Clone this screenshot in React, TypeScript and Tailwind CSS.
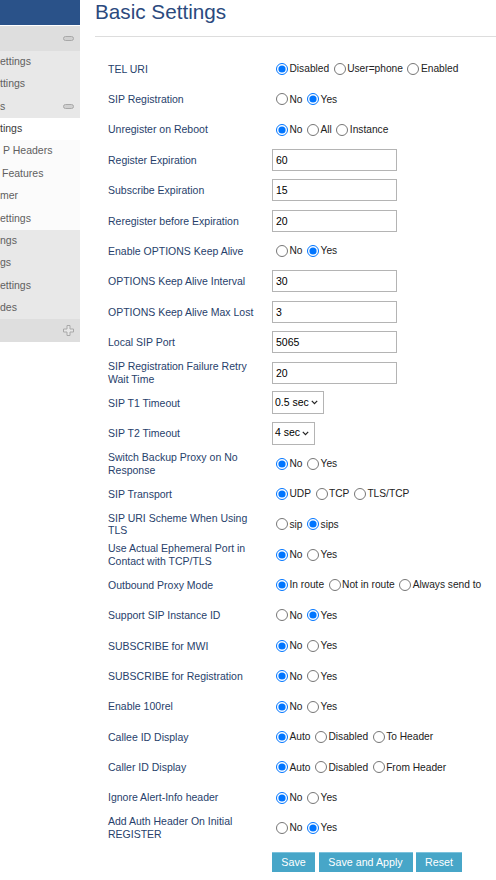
import React from "react";

type Row = {
  label: string;
  opts?: string[];
  sel?: number;
  input?: string;
  select?: string;
  selW?: number;
};

const rows: Row[] = [
  { label: "TEL URI", opts: ["Disabled", "User=phone", "Enabled"], sel: 0 },
  { label: "SIP Registration", opts: ["No", "Yes"], sel: 1 },
  { label: "Unregister on Reboot", opts: ["No", "All", "Instance"], sel: 0 },
  { label: "Register Expiration", input: "60" },
  { label: "Subscribe Expiration", input: "15" },
  { label: "Reregister before Expiration", input: "20" },
  { label: "Enable OPTIONS Keep Alive", opts: ["No", "Yes"], sel: 1 },
  { label: "OPTIONS Keep Alive Interval", input: "30" },
  { label: "OPTIONS Keep Alive Max Lost", input: "3" },
  { label: "Local SIP Port", input: "5065" },
  { label: "SIP Registration Failure Retry Wait Time", input: "20" },
  { label: "SIP T1 Timeout", select: "0.5 sec", selW: 52 },
  { label: "SIP T2 Timeout", select: "4 sec", selW: 43 },
  { label: "Switch Backup Proxy on No Response", opts: ["No", "Yes"], sel: 0 },
  { label: "SIP Transport", opts: ["UDP", "TCP", "TLS/TCP"], sel: 0 },
  { label: "SIP URI Scheme When Using TLS", opts: ["sip", "sips"], sel: 1 },
  { label: "Use Actual Ephemeral Port in Contact with TCP/TLS", opts: ["No", "Yes"], sel: 0 },
  { label: "Outbound Proxy Mode", opts: ["In route", "Not in route", "Always send to"], sel: 0 },
  { label: "Support SIP Instance ID", opts: ["No", "Yes"], sel: 1 },
  { label: "SUBSCRIBE for MWI", opts: ["No", "Yes"], sel: 0 },
  { label: "SUBSCRIBE for Registration", opts: ["No", "Yes"], sel: 0 },
  { label: "Enable 100rel", opts: ["No", "Yes"], sel: 0 },
  { label: "Callee ID Display", opts: ["Auto", "Disabled", "To Header"], sel: 0 },
  { label: "Caller ID Display", opts: ["Auto", "Disabled", "From Header"], sel: 0 },
  { label: "Ignore Alert-Info header", opts: ["No", "Yes"], sel: 0 },
  { label: "Add Auth Header On Initial REGISTER", opts: ["No", "Yes"], sel: 1 },
];

function MinusIcon() {
  return (
    <svg width="11" height="5" viewBox="0 0 11 5">
      <rect x="0.5" y="0.5" width="10" height="4" rx="2" fill="#d0d0d0" stroke="#a8a8a8" />
    </svg>
  );
}

function PlusIcon() {
  return (
    <svg width="11" height="11" viewBox="0 0 11 11">
      <path
        d="M4 0.5h3v3.5h3.5v3h-3.5v3.5h-3v-3.5h-3.5v-3h3.5z"
        fill="#e6e6e6"
        stroke="#a8a8a8"
        strokeWidth="1"
      />
    </svg>
  );
}

function SideItem({ text, pl = 0, dark = false }: { text: string; pl?: number; dark?: boolean }) {
  return (
    <div
      className={`h-[22.4px] flex items-center whitespace-nowrap overflow-hidden ${dark ? "text-[#3a3a3a]" : "text-[#606060]"}`}
      style={{ paddingLeft: pl }}
    >
      {text}
    </div>
  );
}

function Sidebar() {
  return (
    <aside className="w-[80px] shrink-0 text-[10.5px]">
      <div className="h-[25px] bg-[#2a5289]" />
      <div className="h-[1px] bg-white" />
      <div className="h-[24.5px] bg-[#dedede] flex items-center justify-end pr-[6px]">
        <MinusIcon />
      </div>
      <div className="bg-[#e8e8e8]">
        <SideItem text="ettings" />
        <SideItem text="ttings" />
        <div className="h-[22.4px] flex items-center justify-between pr-[6px] text-[#606060]">
          <span>s</span>
          <MinusIcon />
        </div>
      </div>
      <div className="bg-white">
        <SideItem text="tings" dark />
      </div>
      <div className="bg-[#fbfbfb]">
        <SideItem text="P Headers" pl={3} />
        <SideItem text=" Features" pl={2} />
        <SideItem text="mer" />
        <SideItem text="ettings" />
      </div>
      <div className="bg-[#e8e8e8]">
        <SideItem text="ngs" />
        <SideItem text="gs" />
        <SideItem text="ettings" />
        <SideItem text="des" />
      </div>
      <div className="h-[22.5px] bg-[#dedede] flex items-center justify-end pr-[6px]">
        <PlusIcon />
      </div>
    </aside>
  );
}

function Chevron() {
  return (
    <svg width="7" height="5" viewBox="0 0 7 5" className="shrink-0">
      <path d="M0.8 0.8L3.5 3.6L6.2 0.8" fill="none" stroke="#222" strokeWidth="1.2" />
    </svg>
  );
}

function Value({ row, idx }: { row: Row; idx: number }) {
  if (row.opts) {
    return (
      <div className="flex items-center text-[10.2px] text-[#222] whitespace-nowrap">
        {row.opts.map((o, i) => (
          <label key={o} className="flex items-center">
            <input
              type="radio"
              name={`r${idx}`}
              defaultChecked={i === row.sel}
              className={`m-0 w-[12px] h-[12px] ${i === 0 ? "ml-[4px]" : "ml-[4.5px]"}`}
            />
            <span className="ml-[1.5px]">{o}</span>
          </label>
        ))}
      </div>
    );
  }
  if (row.input !== undefined) {
    return (
      <input
        type="text"
        defaultValue={row.input}
        className="w-[125px] h-[22px] border border-[#b4b4b4] bg-white pl-[3px] text-[10.5px] text-black outline-none"
      />
    );
  }
  return (
    <div
      className="h-[23px] border border-[#b4b4b4] bg-white flex items-center justify-between pl-[2px] pr-[5px] text-[10.5px] text-black"
      style={{ width: row.selW }}
    >
      <span>{row.select}</span>
      <Chevron />
    </div>
  );
}

export default function App() {
  return (
    <div className="flex w-[496px] min-h-[880px] bg-white overflow-hidden font-['Liberation_Sans',Arial,sans-serif]">
      <Sidebar />
      <main className="ml-[15px] flex-1 min-w-0">
        <div className="h-[37px] border-b border-[#dddddd] text-[20.7px] leading-[24px] text-[#2b4a7e] whitespace-nowrap">
          Basic Settings
        </div>
        <div className="pt-[16.8px] pl-[13px]">
          {rows.map((r, i) => (
            <div key={r.label} className="flex items-center h-[30.36px]">
              <div className="w-[164px] shrink-0 pr-[12px] text-[10.5px] leading-[12.5px] text-[#27416b]">
                {r.label}
              </div>
              <Value row={r} idx={i} />
            </div>
          ))}
          <div className="flex gap-[3.5px] ml-[164px] mt-[8.8px]">
            <button className="w-[43px] h-[20px] bg-[#47a6c8] border-t border-[#7cc2dc] text-white text-[10.7px]">
              Save
            </button>
            <button className="w-[94px] h-[20px] bg-[#47a6c8] border-t border-[#7cc2dc] text-white text-[10.7px]">
              Save and Apply
            </button>
            <button className="w-[46px] h-[20px] bg-[#47a6c8] border-t border-[#7cc2dc] text-white text-[10.7px]">
              Reset
            </button>
          </div>
        </div>
      </main>
    </div>
  );
}
